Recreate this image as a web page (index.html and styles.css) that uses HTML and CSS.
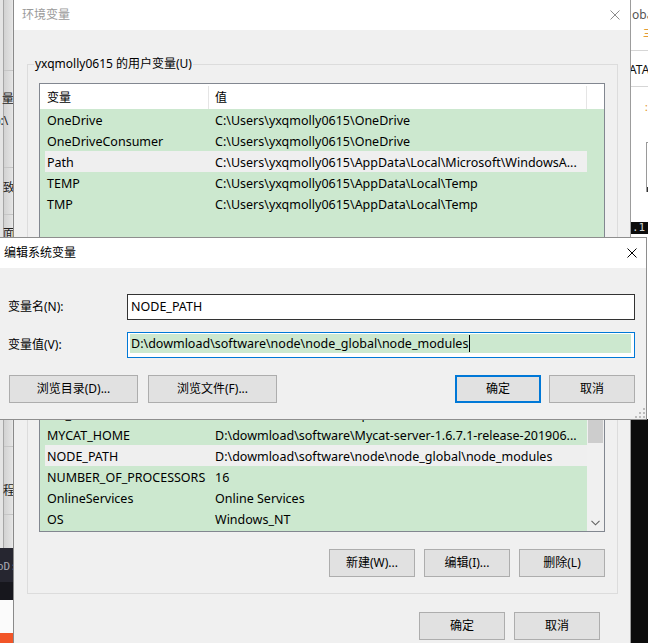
FILE: index.html
```html
<!DOCTYPE html>
<html>
<head>
<meta charset="utf-8">
<title>环境变量</title>
<link rel="stylesheet" href="styles.css">
</head>
<body>
<div class="bg-left">
  <div class="bl-line l1"></div>
  <div class="bl-line l2"></div>
  <div class="bl-line l3"></div>
  <div class="bl-line l4"></div>
  <div class="bl-line l5"></div>
  <span class="bl-t t1">量</span>
  <span class="bl-t t2">):\</span>
  <span class="bl-t t3">致</span>
  <span class="bl-t t4">面</span>
  <span class="bl-t t5">程</span>
  <div class="bl-term"><span>oD:</span></div>
  <div class="bl-white"></div>
  <div class="bl-orange"></div>
</div>

<div class="bg-right">
  <span class="br-t oba">oba</span>
  <span class="br-o o1">三</span>
  <div class="br-line b1"></div>
  <span class="br-t ata">ATA</span>
  <div class="br-line b2"></div>
  <span class="br-o o2">:</span>
  <div class="br-box"></div>
  <div class="br-band">.1</div>
  <div class="br-term"></div>
</div>

<div class="main">
  <div class="tbar">
    <span class="ttl">环境变量</span>
    <svg class="xicon" width="10" height="10" viewBox="0 0 10 10"><path d="M0.5 0.5L9.5 9.5M9.5 0.5L0.5 9.5" stroke="#8c8c8c" stroke-width="1" fill="none"/></svg>
  </div>
  <div class="mbody">
    <fieldset class="group">
      <legend>yxqmolly0615 的用户变量(U)</legend>
      <div class="list user">
        <div class="lv">
          <div class="head"><div class="c1">变量</div><div class="c2">值</div></div>
          <div class="row"><div class="c1">OneDrive</div><div class="c2">C:\Users\yxqmolly0615\OneDrive</div></div>
          <div class="row"><div class="c1">OneDriveConsumer</div><div class="c2">C:\Users\yxqmolly0615\OneDrive</div></div>
          <div class="row sel"><div class="c1">Path</div><div class="c2">C:\Users\yxqmolly0615\AppData\Local\Microsoft\WindowsA...</div></div>
          <div class="row"><div class="c1">TEMP</div><div class="c2">C:\Users\yxqmolly0615\AppData\Local\Temp</div></div>
          <div class="row"><div class="c1">TMP</div><div class="c2">C:\Users\yxqmolly0615\AppData\Local\Temp</div></div>
        </div>
      </div>
      <div class="btns">
        <button class="btn">新建(N)...</button>
        <button class="btn">编辑(E)...</button>
        <button class="btn">删除(D)</button>
      </div>
    </fieldset>

    <fieldset class="group sysgrp">
      <legend>系统变量(S)</legend>
      <div class="list sys">
        <div class="lv">
          <div class="head"><div class="c1">变量</div><div class="c2">值</div></div>
          <div class="row"><div class="c1">ComSpec</div><div class="c2">C:\WINDOWS\system32\cmd.exe</div></div>
          <div class="row"><div class="c1">DriverData</div><div class="c2">C:\Windows\System32\Drivers\DriverData</div></div>
          <div class="row"><div class="c1">M2_HOME</div><div class="c2">D:\dowmload\software\apache-maven-3.6.3</div></div>
          <div class="row"><div class="c1">MYCAT_HOME</div><div class="c2">D:\dowmload\software\Mycat-server-1.6.7.1-release-201906...</div></div>
          <div class="row sel"><div class="c1">NODE_PATH</div><div class="c2">D:\dowmload\software\node\node_global\node_modules</div></div>
          <div class="row"><div class="c1">NUMBER_OF_PROCESSORS</div><div class="c2">16</div></div>
          <div class="row"><div class="c1">OnlineServices</div><div class="c2">Online Services</div></div>
          <div class="row"><div class="c1">OS</div><div class="c2">Windows_NT</div></div>
        </div>
        <div class="vscroll">
          <div class="sb-btn"></div>
          <div class="thumb"></div>
          <div class="sb-fill"></div>
          <div class="sb-btn down">
            <svg width="9" height="6" viewBox="0 0 9 6"><path d="M0.5 0.8L4.5 4.8L8.5 0.8" stroke="#606060" stroke-width="1.1" fill="none"/></svg>
          </div>
        </div>
      </div>
      <div class="btns">
        <button class="btn">新建(W)...</button>
        <button class="btn">编辑(I)...</button>
        <button class="btn">删除(L)</button>
      </div>
    </fieldset>

    <div class="foot">
      <button class="btn">确定</button>
      <button class="btn">取消</button>
    </div>
  </div>
</div>

<div class="dlg">
  <div class="dtbar">
    <span class="dttl">编辑系统变量</span>
    <svg class="xicon" width="10" height="10" viewBox="0 0 10 10"><path d="M0.5 0.5L9.5 9.5M9.5 0.5L0.5 9.5" stroke="#000" stroke-width="1" fill="none"/></svg>
  </div>
  <div class="dbody">
    <div class="field">
      <label>变量名(N):</label>
      <div class="input">NODE_PATH</div>
    </div>
    <div class="field">
      <label>变量值(V):</label>
      <div class="input focus"><div class="selbox"><span>D:\dowmload\software\node\node_global\node_modules</span><span class="caret"></span></div></div>
    </div>
    <div class="dbtns">
      <div class="grp">
        <button class="btn wide">浏览目录(D)...</button>
        <button class="btn wide">浏览文件(F)...</button>
      </div>
      <div class="grp narrow">
        <button class="btn default">确定</button>
        <button class="btn">取消</button>
      </div>
    </div>
  </div>
  <svg class="grip" width="10" height="10" viewBox="0 0 10 10">
    <rect x="8" y="0" width="2" height="2" fill="#bcbcbc"/>
    <rect x="4" y="4" width="2" height="2" fill="#bcbcbc"/>
    <rect x="8" y="4" width="2" height="2" fill="#bcbcbc"/>
    <rect x="0" y="8" width="2" height="2" fill="#bcbcbc"/>
    <rect x="4" y="8" width="2" height="2" fill="#bcbcbc"/>
    <rect x="8" y="8" width="2" height="2" fill="#bcbcbc"/>
  </svg>
</div>
</body>
</html>
```

FILE: styles.css
```css
* { box-sizing: border-box; }
html, body { margin: 0; padding: 0; }
body {
  width: 648px;
  height: 643px;
  overflow: hidden;
  position: relative;
  background: #fff;
  font-family: "Noto Sans", "Noto Sans CJK SC", sans-serif;
  font-size: 12px;
  color: #000;
}

/* ---------- background windows (left) ---------- */
.bg-left {
  position: absolute;
  left: 0; top: 0;
  width: 13px; height: 643px;
  overflow: hidden;
  background: linear-gradient(to right, #e4e4e4 0, #e4e4e4 3px, #a6a6a6 3px, #a6a6a6 4px, #d2d2d2 4px, #e3e3e3 12px, #ededed 13px);
}
.bl-line { position: absolute; left: 4px; right: 0; height: 1px; background: #c6c6c6; }
.bl-line.l1 { top: 70px; }
.bl-line.l2 { top: 167px; }
.bl-line.l3 { top: 214px; }
.bl-line.l4 { top: 446px; }
.bl-line.l5 { top: 514px; }
.bl-t { position: absolute; line-height: 14px; font-size: 12px; color: #1e1e1e; white-space: nowrap; }
.bl-t.t1 { left: 2px; top: 92px; }
.bl-t.t2 { left: -3px; top: 114px; }
.bl-t.t3 { left: 3px; top: 181px; }
.bl-t.t4 { left: 3px; top: 227px; }
.bl-t.t5 { left: 3px; top: 484px; }
.bl-term {
  position: absolute; left: 0; top: 548px; width: 13px; height: 52px;
  background: linear-gradient(#262630 0, #262630 34px, #17171d 34px);
}
.bl-term span {
  position: absolute; left: -3px; top: 12px;
  font-family: "DejaVu Sans Mono", monospace; font-size: 11px; line-height: 13px; color: #a8a8b0;
}
.bl-white { position: absolute; left: 0; top: 600px; width: 13px; height: 33px; background: #fbfbfb; }
.bl-orange { position: absolute; left: 0; top: 633px; width: 13px; height: 10px; background: #f25528; }

/* ---------- background windows (right) ---------- */
.bg-right {
  position: absolute;
  left: 631px; top: 0;
  width: 17px; height: 643px;
  overflow: hidden;
  background: #fff;
}
.br-t { position: absolute; white-space: nowrap; font-size: 12px; line-height: 14px; }
.br-t.oba { left: 1px; top: 8px; color: #555; }
.br-t.ata { left: -2px; top: 63px; color: #111; }
.br-o { position: absolute; color: #e08a00; font-size: 10px; line-height: 12px; }
.br-o.o1 { left: 12px; top: 27px; }
.br-o.o2 { left: 14px; top: 101px; }
.br-line { position: absolute; left: 0; right: 0; height: 1px; background: #d6d6d6; }
.br-line.b1 { top: 50px; }
.br-line.b2 { top: 86px; }
.br-box {
  position: absolute; left: 15px; top: 142px; width: 4px; height: 50px;
  border-left: 1px solid #9a9a9a; border-top: 1px solid #9a9a9a;
  background: linear-gradient(#fff 0, #fff 44px, #333 44px);
}
.br-band {
  position: absolute; left: 0; top: 222px; width: 17px; height: 12px;
  background: #0c0c0c; color: #cfcfcf;
  font-family: "DejaVu Sans Mono", monospace; font-size: 11px; line-height: 12px;
  padding-left: 1px;
}
.br-term { position: absolute; left: 0; top: 419px; width: 17px; height: 224px; background: #0c0c0c; }

/* ---------- main window ---------- */
.main {
  position: absolute;
  left: 13px; top: 0;
  width: 618px; height: 660px;
  border-left: 1px solid #8a8a8a;
  border-right: 1px solid #9c9c9c;
  background: #f0f0f0;
}
.tbar {
  height: 30px;
  background: #fff;
  display: flex;
  align-items: center;
  justify-content: space-between;
  padding: 0 10px 0 8px;
}
.ttl { color: #9a9a9a; line-height: 16px; }
.xicon { display: block; }
.mbody { padding: 26px 12px 0 13px; }

.group {
  margin: 0;
  min-width: 0;
  border: 1px solid #dcdcdc;
  padding: 11px 12px 16px 11px;
}
.group legend {
  padding: 0 1px;
  margin-left: -5px;
  line-height: 16px;
  font-size: 12px;
}
.group.sysgrp { margin-top: 6px; }

.list {
  border: 1px solid #828790;
  background: #cce8cf;
  overflow: hidden;
  display: flex;
}
.list.user { height: 157px; }
.list.sys { height: 197px; }
.lv { flex: 1; min-width: 0; }
.head { display: flex; height: 25px; background: #fff; padding-top: 2px; }
.head > div { display: flex; align-items: center; line-height: 16px; }
.head .c1 { width: 169px; border-right: 1px solid #e5e5e5; padding-left: 7px; }
.head .c2 { width: 378px; border-right: 1px solid #e5e5e5; padding-left: 6px; }
.row {
  display: flex;
  align-items: center;
  height: 21px;
  width: 542px;
  margin-left: 5px;
  padding-top: 2px;
  line-height: 16px;
  font-size: 12.5px;
}
.row.sel { background: #efefef; }
.row .c1 { width: 164px; padding-left: 2px; white-space: nowrap; overflow: hidden; }
.row .c2 { flex: 1; padding-left: 6px; white-space: nowrap; overflow: hidden; }

.vscroll {
  width: 17px;
  background: #f0f0f0;
  display: flex;
  flex-direction: column;
}
.sb-btn { height: 17px; display: flex; align-items: center; justify-content: center; }
.thumb { height: 84px; margin: 6px 1px 0; background: #cdcdcd; }
.sb-fill { flex: 1; }

.btns {
  display: flex;
  justify-content: flex-end;
  gap: 9px;
  margin-top: 17px;
}
.btn {
  width: 86px;
  height: 28px;
  margin: 0;
  padding: 0;
  background: #e1e1e1;
  border: 1px solid #adadad;
  font-family: inherit;
  font-size: 12px;
  color: #000;
  display: flex;
  align-items: center;
  justify-content: center;
  line-height: 16px;
}
.foot {
  display: flex;
  justify-content: flex-end;
  gap: 9px;
  margin-top: 18px;
  margin-right: 18px;
}

/* ---------- edit dialog ---------- */
.dlg {
  position: absolute;
  left: -1px; top: 237px;
  width: 648px; height: 183px;
  border: 1px solid #8e8e8e;
  background: #f0f0f0;
}
.dtbar {
  height: 30px;
  background: #fff;
  display: flex;
  align-items: center;
  justify-content: space-between;
  padding: 0 9px 0 4px;
}
.dttl { line-height: 16px; }
.dbody { padding: 26px 11px 0 8px; }
.field { display: flex; align-items: center; height: 26px; }
.field + .field { margin-top: 12px; }
.field label { width: 119px; line-height: 16px; }
.input {
  flex: 1;
  height: 26px;
  border: 1px solid #333;
  background: #fff;
  padding-left: 3px;
  display: flex;
  align-items: center;
  line-height: 16px;
  white-space: nowrap;
  font-size: 12.5px;
}
.input.focus {
  border-color: #0078d7;
  padding: 1px 3px 4px 2px;
  align-items: stretch;
}
.selbox {
  flex: 1;
  background: #cce8cf;
  padding-left: 1px;
  display: flex;
  align-items: center;
}
.caret { display: inline-block; width: 1px; height: 17px; background: #000; margin-left: 1px; }
.dbtns {
  display: flex;
  justify-content: space-between;
  margin-top: 17px;
  padding-left: 1px;
}
.grp { display: flex; gap: 10px; }
.grp.narrow { gap: 8px; }
.btn.wide { width: 129px; }
.btn.default { border: 2px solid #0078d7; }
.grip { position: absolute; right: 1px; bottom: 1px; }
```
